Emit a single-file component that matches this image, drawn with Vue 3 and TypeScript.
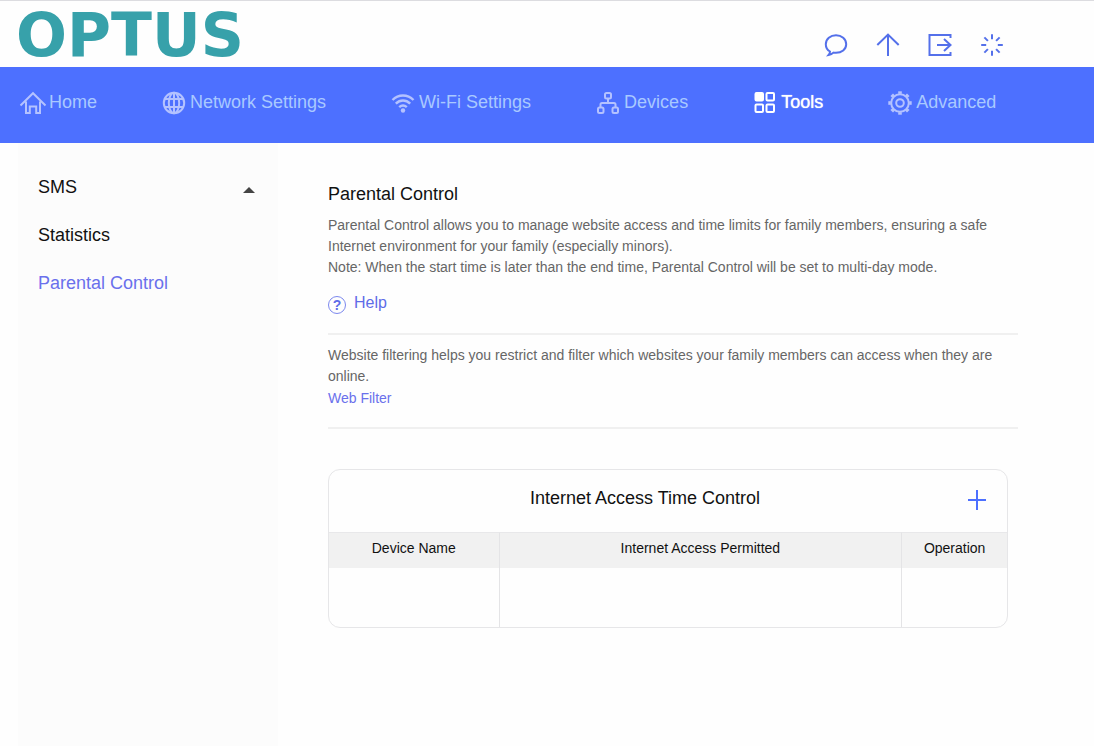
<script setup lang="ts">
import { ref } from 'vue'

interface NavItem {
  id: string
  label: string
}

const navItems: NavItem[] = [
  { id: 'home', label: 'Home' },
  { id: 'network', label: 'Network Settings' },
  { id: 'wifi', label: 'Wi-Fi Settings' },
  { id: 'devices', label: 'Devices' },
  { id: 'tools', label: 'Tools' },
  { id: 'advanced', label: 'Advanced' },
]
const activeNav = ref('tools')

const sideItems = ['Statistics', 'Parental Control']
const activeSide = ref('Parental Control')

const columns = ['Device Name', 'Internet Access Permitted', 'Operation']
const rays = [0, 45, 90, 135, 180, 225, 270, 315]
</script>

<template>
  <div class="page">
    <header class="top">
      <a href="#" class="logo">OPTUS</a>
      <div class="actions">
        <button type="button" aria-label="Messages">
          <svg viewBox="0 0 24 24"><path d="M6 18.500C3.400 17 1.800 14.300 1.800 11.200C1.800 6 6.400 2.200 12 2.200s10.200 3.800 10.200 9-4.600 8.600-10.200 8.600c-1 0-1.800 0-2.600-.2-1.200 1.200-2.800 2-4.800 2.400 1-1.200 1.400-2.200 1.400-3.500z" /></svg>
        </button>
        <button type="button" aria-label="Update">
          <svg viewBox="0 0 24 24"><path d="M12 23V1.800M1.300 12L12 1.600 22.700 12" /></svg>
        </button>
        <button type="button" aria-label="Log out">
          <svg viewBox="0 0 24 24"><path d="M22.500 5V2h-21v20h21V19M9 12h13.500M16 6l6.500 6-6.500 6" /></svg>
        </button>
        <button type="button" aria-label="Loading">
          <svg viewBox="0 0 24 24">
            <path v-for="r in rays" :key="r" d="M12 1.200v5" :transform="`rotate(${r} 12 12)`" />
          </svg>
        </button>
      </div>
    </header>

    <nav class="nav">
      <a
        v-for="item in navItems"
        :key="item.id"
        href="#"
        :class="{ active: item.id === activeNav }"
        @click.prevent="activeNav = item.id"
      >
        <svg v-if="item.id === 'home'" class="wide" viewBox="0 0 28 24"><path d="M1.500 14.500L14 2.200l12.500 12.300M7 10.500v11.500h3.800v-6.500h6.400v6.500H21V10.500" /></svg>
        <svg v-else-if="item.id === 'network'" viewBox="0 0 24 24">
          <circle cx="12" cy="12" r="10.200" />
          <ellipse cx="12" cy="12" rx="5.200" ry="10.200" />
          <path d="M12 1.800v20.400M2.800 8h18.400M2.800 16h18.400" />
        </svg>
        <svg v-else-if="item.id === 'wifi'" viewBox="0 0 24 24">
          <path class="thick" d="M1.500 9C7.500 3 16.500 3 22.500 9M4.800 12.600c4.300-4.200 10.100-4.200 14.400 0M8.200 16.200c2.400-2.200 5.200-2.200 7.600 0" />
          <circle class="solid" cx="12" cy="19.500" r="2.200" />
        </svg>
        <svg v-else-if="item.id === 'devices'" viewBox="0 0 24 24">
          <rect x="9" y="2" width="6" height="5.500" rx="1.500" />
          <rect x="2" y="16.500" width="5.500" height="5.500" rx="1.500" />
          <rect x="16.500" y="16.500" width="5.500" height="5.500" rx="1.500" />
          <path d="M12 7.500v4.500M4.500 16.500v-3q0-1.500 1.500-1.500h12q1.500 0 1.500 1.500v3" />
        </svg>
        <svg v-else-if="item.id === 'tools'" viewBox="0 0 24 24">
          <rect class="filled" x="2.500" y="2" width="7.500" height="7.500" rx="1" />
          <rect x="13.500" y="2" width="7.500" height="7.500" rx="1" />
          <rect x="2.500" y="13.500" width="7.500" height="7.500" rx="1" />
          <rect x="13.500" y="13.500" width="7.500" height="7.500" rx="1" />
        </svg>
        <svg v-else viewBox="0 0 24 24">
          <circle cx="12" cy="12" r="8.800" />
          <circle cx="12" cy="12" r="3.800" />
          <path v-for="r in rays" :key="r" class="tooth" d="M12 .3v2.500" :transform="`rotate(${r} 12 12)`" />
        </svg>
        <span>{{ item.label }}</span>
      </a>
    </nav>

    <div class="body">
      <aside class="side">
        <button type="button" class="side-group" aria-expanded="true">
          <span>SMS</span>
          <i class="caret"></i>
        </button>
        <a
          v-for="s in sideItems"
          :key="s"
          href="#"
          :class="{ active: s === activeSide }"
          @click.prevent="activeSide = s"
        >{{ s }}</a>
      </aside>

      <main class="main">
        <section class="intro">
          <h1>Parental Control</h1>
          <p>
            Parental Control allows you to manage website access and time limits for family members, ensuring a safe
            Internet environment for your family (especially minors).<br />
            Note: When the start time is later than the end time, Parental Control will be set to multi-day mode.
          </p>
          <a href="#" class="help"><i class="help-icon">?</i><span>Help</span></a>
        </section>

        <section class="filter">
          <p>
            Website filtering helps you restrict and filter which websites your family members can access when they are
            online.
          </p>
          <a href="#">Web Filter</a>
        </section>

        <section class="card">
          <div class="card-head">
            <h2>Internet Access Time Control</h2>
            <button type="button" aria-label="Add">
              <svg viewBox="0 0 20 20"><path d="M10 0v20M1 10h18" /></svg>
            </button>
          </div>
          <table>
            <thead>
              <tr>
                <th v-for="c in columns" :key="c" scope="col">{{ c }}</th>
              </tr>
            </thead>
            <tbody>
              <tr>
                <td v-for="c in columns" :key="c"></td>
              </tr>
            </tbody>
          </table>
        </section>
      </main>
    </div>
  </div>
</template>

<style>
body {
  background: #fefefe;
}
</style>

<style scoped>
.page {
  display: flex;
  flex-direction: column;
  min-height: 100vh;
  box-sizing: border-box;
  border-top: 1px solid #dcdce0;
  font-family: "Liberation Sans", Arial, sans-serif;
  font-size: 18px;
  color: #111;
}
a {
  color: #5e6ce8;
  text-decoration: none;
}
button {
  padding: 0;
  border: 0;
  background: none;
  font: inherit;
  color: inherit;
  cursor: pointer;
}
svg {
  display: block;
  fill: none;
  stroke: currentColor;
}
h1,
h2,
p {
  margin: 0;
  font-weight: 400;
}
h1,
h2 {
  font-size: 18px;
  line-height: 24px;
}

.top {
  display: flex;
  justify-content: space-between;
  height: 66px;
  padding: 0 90px 0 16px;
}
.logo {
  font-family: "DejaVu Sans", sans-serif;
  font-weight: 700;
  font-size: 60px;
  line-height: 68px;
  color: #37a1aa;
}
.actions {
  display: flex;
  align-items: flex-start;
  gap: 28px;
  padding-top: 32px;
  color: #5470ea;
}
.actions svg {
  width: 24px;
  height: 24px;
  stroke-width: 2;
}

.nav {
  display: flex;
  gap: 65px;
  height: 76px;
  padding: 0 19px;
  background: #4d70ff;
}
.nav a {
  display: flex;
  gap: 4px;
  height: 70px;
  align-items: center;
  color: #a9c9ff;
  white-space: nowrap;
}
.nav a svg {
  width: 24px;
  height: 24px;
  margin-top: 2px;
  stroke: #b4c2ff;
  stroke-width: 2;
}
.nav a svg.wide {
  width: 28px;
  margin-right: -2px;
}
.nav a span {
  line-height: 24px;
}
.nav a.active {
  color: #fff;
}
.nav a.active span {
  text-shadow: 0 0 1px #fff;
}
.nav a.active svg {
  stroke: #fff;
}
.nav .thick {
  stroke-width: 2.400;
}
.nav .solid {
  fill: #b4c2ff;
  stroke: none;
}
.nav .filled {
  fill: #fff;
}
.nav .tooth {
  stroke-width: 3.600;
}

.body {
  display: flex;
  flex: 1;
  padding-left: 18px;
}
.side {
  display: flex;
  flex-direction: column;
  flex: 0 0 220px;
  padding: 20px 20px 0;
  background: #fcfcfc;
}
.side a,
.side-group {
  line-height: 48px;
  text-align: left;
  color: #111;
}
.side a.active {
  color: #6a70ec;
}
.side-group {
  display: flex;
  justify-content: space-between;
  align-items: center;
  padding-right: 3px;
}
.caret {
  margin-top: 6px;
  border: 6px solid transparent;
  border-top: 0;
  border-bottom-color: #444;
}

.main {
  flex: 1;
  padding: 39px 76px 40px 50px;
}
.intro,
.filter {
  border-bottom: 2px solid #f0f0f0;
}
p,
.filter a {
  font-size: 14px;
  line-height: 21px;
  color: #666;
}
.intro p {
  margin-top: 9px;
}
.help {
  display: flex;
  gap: 8px;
  padding: 15px 0 19px;
  font-size: 16px;
  line-height: 20px;
}
.help-icon {
  width: 16px;
  height: 16px;
  margin-top: 3px;
  border: 1px solid #7c88ee;
  border-radius: 50%;
  font-size: 14px;
  line-height: 17px;
  font-style: normal;
  font-weight: 700;
  text-align: center;
}
.filter {
  padding: 10px 0 18px;
}
.filter a {
  display: block;
  margin-top: 1px;
  color: #6a70ec;
}

.card {
  margin: 40px 10px 0 0;
  border: 1px solid #e6e6e8;
  border-radius: 12px;
  overflow: hidden;
}
.card-head {
  display: flex;
  align-items: center;
  box-sizing: border-box;
  height: 62px;
  padding: 0 20px 2px 0;
}
.card-head h2 {
  flex: 1;
  margin-bottom: 4px;
  text-align: center;
}
.card-head button {
  margin-left: 6px;
  color: #4d70ff;
}
.card-head svg {
  width: 20px;
  height: 20px;
  stroke-width: 2;
}
table {
  width: 100%;
  table-layout: fixed;
  border-collapse: separate;
  border-spacing: 0;
}
th {
  height: 36px;
  padding: 0 0 6px;
  box-sizing: border-box;
  border-top: 1px solid #e8e8ea;
  background: #f1f1f1;
  font-size: 14px;
  font-weight: 400;
}
th:first-child {
  width: 25%;
}
th:last-child {
  width: 15.600%;
}
td {
  height: 59px;
  padding: 0;
}
th + th,
td + td {
  border-left: 1px solid #e4e4e6;
}
</style>
